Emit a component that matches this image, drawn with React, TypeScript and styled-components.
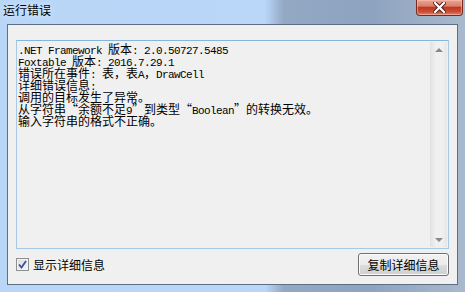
import React from "react";
import styled, { createGlobalStyle } from "styled-components";

const Global = createGlobalStyle`
  html, body {
    margin: 0;
    padding: 0;
    overflow: hidden;
  }
`;

const Window = styled.div`
  width: 465px;
  height: 292px;
  display: flex;
  flex-direction: column;
  box-sizing: border-box;
  background: linear-gradient(90deg, #b9d6f7 0%, #bad7f9 57%, #93a8c3 61%, #8ea3bf 80%, #a9b9cd 100%);
  font-family: "Noto Sans CJK SC", "Liberation Sans", sans-serif;
`;

const TitleBar = styled.div`
  height: 24px;
  flex: none;
  display: flex;
  align-items: flex-start;
  justify-content: space-between;
  padding-left: 3px;
  position: relative;
`;

const Title = styled.div`
  font-size: 12px;
  line-height: 12px;
  margin-top: 4px;
  color: #000;
  text-shadow: 0 0 6px rgba(255, 255, 255, 0.9);
`;

const CloseButton = styled.div`
  position: absolute;
  top: 0;
  right: 2px;
  width: 47px;
  height: 16px;
  box-sizing: border-box;
  border: 1px solid #7a2a1c;
  border-top: none;
  border-radius: 0 0 4px 4px;
  background: linear-gradient(180deg, #eaa594 0%, #dc7f68 40%, #c2381e 50%, #c9513a 80%, #e3896c 100%);
  box-shadow: inset 0 0 0 1px rgba(255, 200, 190, 0.5);
  display: flex;
  align-items: center;
  justify-content: center;
`;

const Client = styled.div`
  flex: 1;
  margin: 0 7px 7px 7px;
  border: 1px solid #5f6f83;
  background: #f0f0f0;
  display: flex;
  flex-direction: column;
  padding: 15px 8px 6px 8px;
  box-sizing: border-box;
`;

const TextBox = styled.div`
  height: 209px;
  box-sizing: border-box;
  border: 1px solid #a6c9e8;
  border-top-color: #88b3dc;
  background: #f0f0f0;
  display: flex;
`;

const TextArea = styled.div`
  flex: 1;
  padding: 2px 1px;
  font-family: "Noto Sans CJK SC", sans-serif;
  font-size: 12px;
  line-height: 12px;
  color: #000;
  white-space: pre;
  text-spacing-trim: space-all;
`;

const Line = styled.div`
  height: 12px;
`;

const Mono = styled.span`
  font-family: "Liberation Mono", "DejaVu Sans Mono", monospace;
  font-size: 11px;
  letter-spacing: -0.6px;
`;

// full-width punctuation cell, as in SimSun
const Wide = styled.span<{ $align: "left" | "right" }>`
  display: inline-block;
  width: 12px;
  text-align: ${({ $align }) => $align};
`;

const ScrollBar = styled.div`
  width: 17px;
  flex: none;
  box-sizing: border-box;
  margin: 1px 1px 1px 0;
  background: linear-gradient(90deg, #e4e4e4 0%, #f0f0f0 30%, #f0f0f0 70%, #e6e6e6 100%);
  border-left: 1px solid #e2e2e2;
  display: flex;
  flex-direction: column;
  justify-content: space-between;
  align-items: center;
  padding: 6px 0 5px 0;
`;

const Arrow = styled.div<{ $down?: boolean }>`
  width: 0;
  height: 0;
  border-left: 4px solid transparent;
  border-right: 4px solid transparent;
  ${({ $down }) =>
    $down ? "border-top: 4px solid #8a8a8a;" : "border-bottom: 4px solid #8a8a8a;"}
`;

const Footer = styled.div`
  flex: 1;
  display: flex;
  align-items: center;
  justify-content: space-between;
  padding-top: 2px;
`;

const CheckRow = styled.label`
  display: flex;
  align-items: center;
  gap: 4px;
  font-size: 12px;
  color: #000;
`;

const CheckBox = styled.div`
  width: 13px;
  height: 13px;
  box-sizing: border-box;
  border: 1px solid #8e8f8f;
  background: linear-gradient(135deg, #dcdcdc 0%, #f6f6f6 100%);
  box-shadow: inset 0 0 0 1px #f4f4f4;
  display: flex;
  align-items: center;
  justify-content: center;
`;

const Button = styled.div`
  width: 91px;
  height: 23px;
  box-sizing: border-box;
  border: 1px solid #707070;
  border-radius: 3px;
  background: linear-gradient(180deg, #f2f2f2 0%, #ebebeb 50%, #dddddd 51%, #cfcfcf 100%);
  box-shadow: inset 0 0 0 1px #fcfcfc;
  display: flex;
  align-items: center;
  justify-content: center;
  font-size: 12px;
  color: #000;
`;

export default function App() {
  return (
    <>
      <Global />
      <Window lang="zh-CN">
        <TitleBar>
          <Title>运行错误</Title>
          <CloseButton>
            <svg width="13" height="11" viewBox="0 0 13 11">
              <path d="M2 1 L11 10 M11 1 L2 10" stroke="#4a1a12" strokeWidth="4" strokeLinecap="square" />
              <path d="M2 1 L11 10 M11 1 L2 10" stroke="#ffffff" strokeWidth="2.2" strokeLinecap="square" />
            </svg>
          </CloseButton>
        </TitleBar>
        <Client>
          <TextBox>
            <TextArea>
              <Line><Mono>.NET Framework </Mono>版本<Mono>: 2.0.50727.5485</Mono></Line>
              <Line><Mono>Foxtable </Mono>版本<Mono>: 2016.7.29.1</Mono></Line>
              <Line>
                错误所在事件<Mono>: </Mono>表<Wide $align="left">，</Wide>表<Mono>A</Mono>
                <Wide $align="left">，</Wide><Mono>DrawCell</Mono>
              </Line>
              <Line>详细错误信息<Mono>:</Mono></Line>
              <Line>调用的目标发生了异常。</Line>
              <Line>
                从字符串<Wide $align="right">“</Wide>余额不足<Mono>9</Mono><Wide $align="left">”</Wide>
                到类型<Wide $align="right">“</Wide><Mono>Boolean</Mono><Wide $align="left">”</Wide>的转换无效。
              </Line>
              <Line>输入字符串的格式不正确。</Line>
            </TextArea>
            <ScrollBar>
              <Arrow />
              <Arrow $down />
            </ScrollBar>
          </TextBox>
          <Footer>
            <CheckRow>
              <CheckBox>
                <svg width="9" height="9" viewBox="0 0 9 9">
                  <path d="M1 4.5 L3.5 7.5 L8 1" fill="none" stroke="#3b4fa8" strokeWidth="1.8" />
                </svg>
              </CheckBox>
              显示详细信息
            </CheckRow>
            <Button>复制详细信息</Button>
          </Footer>
        </Client>
      </Window>
    </>
  );
}
